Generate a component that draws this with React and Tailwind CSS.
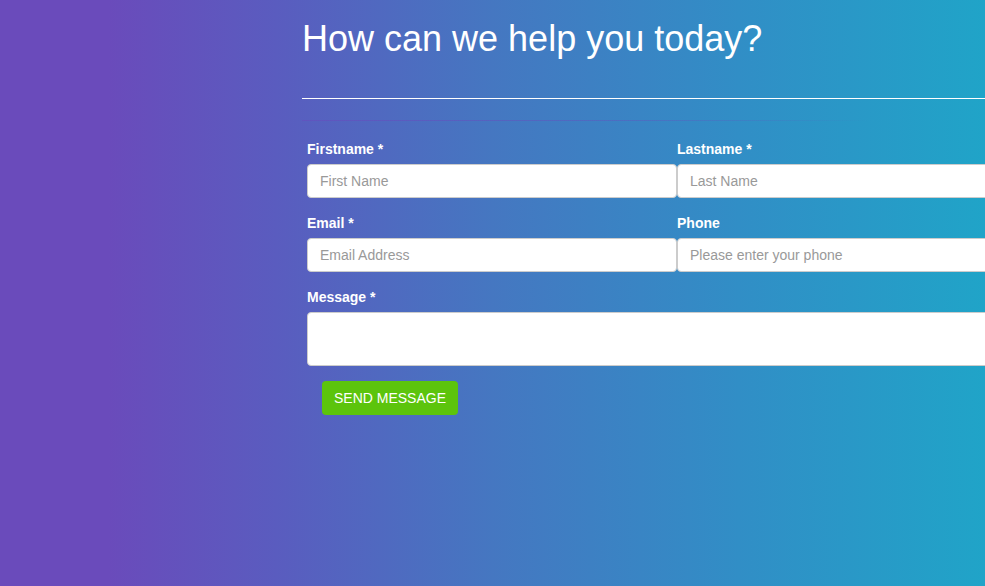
export default function App() {
  return (
    <div
      className="w-full h-[586px] overflow-hidden bg-[linear-gradient(to_right,#6a4bbb_0%,#6a4bbb_11%,#5a5cbf_28%,#4577c1_50%,#318ec6_75%,#20a4c8_100%)]"
      style={{ fontFamily: '"Liberation Sans", Arial, sans-serif' }}
    >
      <div className="ml-[302px] w-[760px] pt-[19px]">
        <h1 className="text-[36px] leading-[40px] text-white font-normal m-0">
          How can we help you today?
        </h1>
        <div className="mt-[39px] h-px w-[760px] bg-white" />
        <div className="mt-[21px] h-px w-[568px] bg-[linear-gradient(to_right,rgba(100,80,190,0.7),rgba(100,80,190,0.4)_60%,transparent)]" />
        <form className="ml-[5px] mt-[18px] w-[740px]" onSubmit={(e) => e.preventDefault()}>
          <div className="grid grid-cols-[370px_370px]">
            <div>
              <label className="block text-[14px] leading-[20px] font-bold text-white mb-[5px]">Firstname *</label>
              <input
                type="text"
                placeholder="First Name"
                className="block w-full h-[34px] bg-white border border-[#ccc] rounded-[4px] px-[12px] text-[14px] text-[#555] placeholder:text-[#999] outline-none"
              />
            </div>
            <div>
              <label className="block text-[14px] leading-[20px] font-bold text-white mb-[5px]">Lastname *</label>
              <input
                type="text"
                placeholder="Last Name"
                className="block w-full h-[34px] bg-white border border-[#ccc] rounded-[4px] px-[12px] text-[14px] text-[#555] placeholder:text-[#999] outline-none"
              />
            </div>
            <div className="mt-[15px]">
              <label className="block text-[14px] leading-[20px] font-bold text-white mb-[5px]">Email *</label>
              <input
                type="email"
                placeholder="Email Address"
                className="block w-full h-[34px] bg-white border border-[#ccc] rounded-[4px] px-[12px] text-[14px] text-[#555] placeholder:text-[#999] outline-none"
              />
            </div>
            <div className="mt-[15px]">
              <label className="block text-[14px] leading-[20px] font-bold text-white mb-[5px]">Phone</label>
              <input
                type="tel"
                placeholder="Please enter your phone"
                className="block w-full h-[34px] bg-white border border-[#ccc] rounded-[4px] px-[12px] text-[14px] text-[#555] placeholder:text-[#999] outline-none"
              />
            </div>
          </div>
          <div className="mt-[15px]">
            <label className="block text-[14px] leading-[20px] font-bold text-white mb-[5px]">Message *</label>
            <textarea
              className="block w-full h-[54px] bg-white border border-[#ccc] rounded-[4px] px-[12px] py-[6px] text-[14px] text-[#555] outline-none resize-none"
            />
          </div>
          <button
            type="submit"
            className="mt-[15px] ml-[15px] h-[34px] w-[136px] bg-[#5cc40c] text-white text-[14px] leading-[20px] rounded-[4px] uppercase"
          >
            SEND MESSAGE
          </button>
        </form>
      </div>
    </div>
  );
}
